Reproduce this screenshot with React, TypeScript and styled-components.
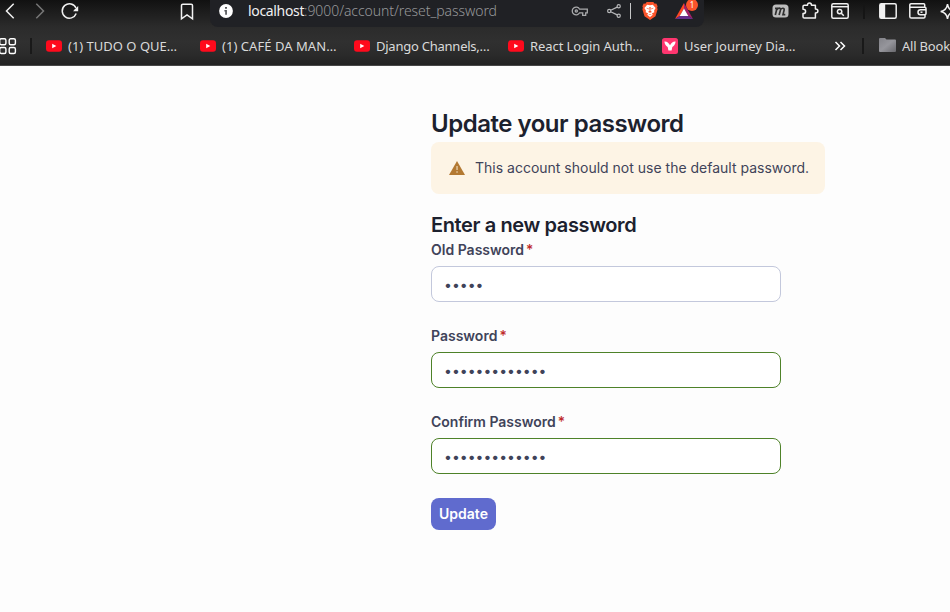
import React from "react";
import styled, { createGlobalStyle } from "styled-components";

const GlobalStyle = createGlobalStyle`
  *, *::before, *::after { box-sizing: border-box; }
  html, body { margin: 0; padding: 0; overflow: hidden; }
  body { background: #fdfdfd; font-family: "Inter", sans-serif; }
  h1, h2, p { margin: 0; }
`;

const Window = styled.div`
  width: 950px;
  height: 612px;
  overflow: hidden;
  background: #fdfdfd;
`;

const Chrome = styled.header`
  height: 66px;
  overflow: hidden;
  background: linear-gradient(#111 0, #1b1b1b 10px, #2b2b2b 27px, #303030 42px, #2b2b2b 54px, #232323 64px);
  border-bottom: 1px solid #474747;
  font-family: "Noto Sans", sans-serif;
`;

const Toolbar = styled.div`
  display: flex;
  align-items: flex-start;
  width: 970px;
  height: 27px;
  color: #f1f1f1;
`;

const Slot = styled.span<{ $w: number; $gap?: number; $color?: string }>`
  display: flex;
  flex: none;
  align-items: center;
  justify-content: center;
  width: ${(p) => p.$w}px;
  height: 22px;
  margin-left: ${(p) => p.$gap ?? 0}px;
  color: ${(p) => p.$color ?? "inherit"};
  svg { display: block; flex: none; overflow: visible; }
`;

const AddressBar = styled.div`
  display: flex;
  flex: none;
  width: 494px;
  height: 27px;
  margin-left: 16px;
  background: #202125;
  border-radius: 0 0 8px 8px;
`;

const Url = styled.span`
  width: 309px;
  margin-left: 15px;
  color: #97989a;
  font-size: 14px;
  font-weight: 300;
  line-height: 22px;
  letter-spacing: -0.07px;
  white-space: nowrap;
`;

const Host = styled.span`
  color: #f0f0f1;
  font-weight: 400;
  letter-spacing: -0.34px;
`;

const Rule = styled.span<{ $gap: number; $color: string; $h: number; $w?: number }>`
  flex: none;
  width: ${(p) => p.$w ?? 1}px;
  height: ${(p) => p.$h}px;
  margin: 3px 0 0 ${(p) => p.$gap}px;
  background: ${(p) => p.$color};
`;

const Rewards = styled(Slot)`
  position: relative;
`;

const Badge = styled.span`
  position: absolute;
  left: 11px;
  top: -1px;
  width: 12px;
  height: 12px;
  border-radius: 50%;
  background: #fb542b;
  color: #fff;
  font-size: 8px;
  line-height: 12px;
  text-align: center;
`;

const BookmarkBar = styled.nav`
  display: flex;
  align-items: flex-start;
  width: 990px;
  height: 38px;
  padding-top: 8px;
  color: #dadada;
`;

const Bookmark = styled.div`
  display: flex;
  flex: none;
  align-items: center;
  gap: 6px;
  width: 154px;
  height: 22px;
`;

const BookmarkLabel = styled.span<{ $spacing?: number }>`
  font-size: 13px;
  line-height: 22px;
  letter-spacing: ${(p) => p.$spacing ?? 0}px;
  white-space: nowrap;
`;

const Page = styled.main`
  display: flex;
  flex-direction: column;
  align-items: flex-start;
  padding: 42px 0 0 431px;
  color: #1c212e;
`;

const Title = styled.h1`
  font-size: 24px;
  font-weight: 600;
  line-height: 32px;
  letter-spacing: -0.48px;
  white-space: nowrap;
`;

const Notice = styled.div`
  display: flex;
  align-items: center;
  width: 394px;
  height: 52px;
  margin-top: 2px;
  padding-left: 18px;
  gap: 10px;
  background: #fdf4e5;
  border-radius: 8px;
  svg { display: block; flex: none; }
`;

const NoticeText = styled.p`
  color: #404359;
  font-size: 14px;
  line-height: 20px;
  white-space: nowrap;
`;

const Subtitle = styled.h2`
  margin-top: 17px;
  font-size: 20px;
  font-weight: 600;
  line-height: 28px;
  letter-spacing: -0.38px;
`;

const Form = styled.form`
  display: flex;
  flex-direction: column;
  align-items: flex-start;
  gap: 24px;
  margin-top: 1px;
`;

const Field = styled.label`
  display: flex;
  flex-direction: column;
  height: 62px;
  color: #404359;
  font-size: 14px;
  font-weight: 600;
  line-height: 20px;
`;

const Required = styled.span`
  margin-left: 2px;
  color: #bf2a2a;
  font-weight: 500;
`;

const Input = styled.input<{ $valid?: boolean }>`
  width: 350px;
  height: 36px;
  margin-top: 6px;
  padding: 0 12px;
  border: 1px solid ${(p) => (p.$valid ? "#4e8229" : "#c3c8dc")};
  border-radius: 8px;
  outline: none;
  background: #fff;
  color: #404359;
  font-family: "Inter", sans-serif;
  font-size: 14px;
`;

const Submit = styled.button`
  width: 65px;
  height: 32px;
  padding: 0 0 2px;
  border: 0;
  border-radius: 8px;
  background: #606bce;
  color: #fff;
  font-family: "Inter", sans-serif;
  font-size: 14px;
  font-weight: 600;
`;

const YouTube = () => (
  <svg width="16" height="12" viewBox="0 0 16 12">
    <rect y=".3" width="16" height="11.4" rx="3" fill="#ff0a1c" />
    <path d="M6.2 3.7v4.6L10.3 6z" fill="#fff" />
  </svg>
);

const Y = () => (
  <svg width="16" height="16" viewBox="0 0 16 16">
    <rect width="16" height="16" rx="2.5" fill="#ff366f" />
    <path d="M2.4 3.6C4.800 3.300 6.600 4.800 8 7.200c1.400-2.400 3.200-3.900 5.600-3.600-.2 2.600-1.300 4.500-3.300 5.400L9.600 12.600H6.400L5.700 9C3.700 8.100 2.600 6.200 2.400 3.600z" fill="#fff" />
  </svg>
);

const bookmarks = [
  { label: "(1) TUDO O QUE…", icon: <YouTube />, spacing: 0 },
  { label: "(1) CAFÉ DA MAN…", icon: <YouTube />, spacing: 0.05 },
  { label: "Django Channels,…", icon: <YouTube />, spacing: -0.24 },
  { label: "React Login Auth…", icon: <YouTube />, spacing: -0.07 },
  { label: "User Journey Dia…", icon: <Y />, spacing: -0.04 },
];

const line = { fill: "none", stroke: "currentColor", strokeWidth: 1.5 } as const;

function BrowserToolbar() {
  return (
    <Toolbar>
      <Slot $w={10} $gap={5}>
        <svg width="10" height="16" viewBox="0 0 10 16" {...line}><path d="M8.700.8 1.500 8l7.200 7.200" /></svg>
      </Slot>
      <Slot $w={10} $gap={20} $color="#777">
        <svg width="10" height="16" viewBox="0 0 10 16" {...line}><path d="M1.300.8 8.500 8l-7.200 7.200" /></svg>
      </Slot>
      <Slot $w={18} $gap={16}>
        <svg width="18" height="16" viewBox="0 0 18 16" {...line}>
          <path d="M15 5A7.200 7.200 0 1 0 15.200 10.500" />
          <path d="M17.200 3v5.200h-5.100l1.700-2z" fill="currentColor" stroke="none" />
        </svg>
      </Slot>
      <Slot $w={14} $gap={101}>
        <svg width="14" height="17" viewBox="0 0 14 17" {...line}><path d="M1.500 2.500a1.300 1.300 0 0 1 1.300-1.300h8.400a1.300 1.300 0 0 1 1.300 1.300v13.300L7 12l-5.500 3.800z" /></svg>
      </Slot>
      <AddressBar>
        <Slot $w={14} $gap={9}>
          <svg width="14" height="14" viewBox="0 0 14 14">
            <circle cx="7" cy="7" r="6.900" fill="#fff" />
            <path d="M6 3.100h2v1.700H6zM5.400 6h2.500v4.800H6.200V7.400h-.8z" fill="#55575a" />
          </svg>
        </Slot>
        <Url><Host>localhost</Host>:9000/account/reset_password</Url>
        <Slot $w={16} $gap={15} $color="#a9aaac">
          <svg width="16" height="10" viewBox="0 0 16 10" fill="none" stroke="currentColor" strokeWidth="1.300">
            <path d="M7.600 3.200A3.900 3.900 0 1 0 7.600 6.800h3.100v2.500h3V6.800h1.600V3.200z" /><circle cx="4.300" cy="5" r="1.100" />
          </svg>
        </Slot>
        <Slot $w={14} $gap={19} $color="#b6b7b9">
          <svg width="14" height="14" viewBox="0 0 14 14" fill="none" stroke="currentColor" strokeWidth="1.200">
            <circle cx="2.200" cy="7" r="1.600" /><circle cx="11.700" cy="2.300" r="1.600" /><circle cx="11.700" cy="11.700" r="1.600" />
            <path d="m3.700 6.300 6.500-3.200M3.700 7.700l6.500 3.200" />
          </svg>
        </Slot>
        <Rule $gap={9} $h={16} $color="#c6c7c8" />
        <Slot $w={16} $gap={11}>
          <svg width="16" height="18" viewBox="0 0 16 18">
            <path d="M4.700 0h6.600l1.400 1.700 1.600-.2 1.300 2.800-.5 1.500.5 1.500-2.100 7L8 18l-5.500-3.700-2.100-7 .5-1.500L.4 4.300l1.300-2.800 1.600.2z" fill="#fb542b" />
            <path d="M5.200 2.700 8 3.200l2.800-.5 2.800 3.400-1.500 2.400.2 1.700-2.500 1.200 1 1.400L8 15l-2.800-2.200 1-1.400-2.500-1.200.2-1.700-1.500-2.400z" fill="#fff" />
            <path d="m4 5.800 2.800.7-.3 1.100zM12 5.800l-2.800.7.3 1.100zM7.300 5h1.400l-.3 3.800L10 9.900l-2 .8-2-.8 1.600-1.100zM6 12.300h4l-2 .8z" fill="#fb542b" />
          </svg>
        </Slot>
        <Rewards $w={18} $gap={17}>
          <svg width="18" height="16" viewBox="0 0 18 16">
            <path d="M9 0 0 16l4.700-3L9 5.400z" fill="#ff4724" />
            <path d="M9 0v5.400l4.300 7.600L18 16z" fill="#a52167" />
            <path d="m0 16 4.700-3h8.600l4.700 3z" fill="#66308a" />
            <path d="M9 5.400 4.700 13h8.600z" fill="#fff" />
          </svg>
          <Badge>1</Badge>
        </Rewards>
      </AddressBar>
      <Slot $w={17} $gap={68}>
        <svg width="17" height="14" viewBox="0 0 17 14">
          <rect x=".5" y=".5" width="16" height="13" rx="3.500" fill="#bcbcbc" />
          <path d="M3 4.300h2L3.300 11M5 5.600c1-1.800 4-2 3.500.3L7.100 11M8.500 5.600c1.200-1.800 4.200-2 3.600.5L11 10.600h2.300" fill="none" stroke="#303030" strokeWidth="1.700" />
        </svg>
      </Slot>
      <Slot $w={18} $gap={12}>
        <svg width="18" height="18" viewBox="0 0 18 18" {...line}>
          <path d="M3.300 3.300h3.200C6.500 1.700 7.200.9 8.500.9s2 .8 2 2.400h3.900v3.800c1.600 0 2.500.7 2.500 2s-.9 2-2.500 2v5H3.300q-1.300 0-1.300-1.300v-3.300c1.700 0 2.600-.8 2.600-2.100S3.700 7.300 2 7.300V4.600q0-1.300 1.300-1.300z" strokeLinejoin="round" />
        </svg>
      </Slot>
      <Slot $w={18} $gap={12}>
        <svg width="18" height="16" viewBox="0 0 18 16" {...line}>
          <rect x=".8" y=".8" width="16.400" height="14.400" rx="1.500" /><path d="M1 3.700h16" /><circle cx="8.600" cy="8.600" r="2.200" /><path d="m10.300 10.300 2.500 2.500" />
        </svg>
      </Slot>
      <Rule $gap={14} $w={2} $h={16} $color="#151515" />
      <Slot $w={18} $gap={14}>
        <svg width="18" height="16" viewBox="0 0 18 16" {...line}><rect x=".8" y=".8" width="16.400" height="14.400" rx="1.500" /><path d="M1 1h5.200v14H1z" fill="currentColor" stroke="none" /></svg>
      </Slot>
      <Slot $w={18} $gap={12}>
        <svg width="18" height="16" viewBox="0 0 18 16" {...line}>
          <path d="M15.700 4V1.800a1 1 0 0 0-1-1H2a1.200 1.200 0 0 0-1.200 1.200v11.500a1.600 1.600 0 0 0 1.600 1.600h12.300a1.300 1.300 0 0 0 1.300-1.300V12M1 4.200h14.700a1.300 1.300 0 0 1 1.300 1.300v5a1.200 1.200 0 0 1-1.200 1.200H11.500a2.500 2.500 0 0 1 0-5H17" /><path d="M11.500 9.200h2" />
        </svg>
      </Slot>
      <Slot $w={17} $gap={12}>
        <svg width="17" height="17" viewBox="0 0 17 17" {...line}><path d="M8.500 1.200c.6 4.400 2.400 6.500 6.800 7.300-4.400.8-6.200 2.900-6.800 7.300-.6-4.400-2.400-6.500-6.800-7.300 4.400-.8 6.200-2.900 6.800-7.300z" /></svg>
      </Slot>
    </Toolbar>
  );
}

function Bookmarks() {
  return (
    <BookmarkBar>
      <Slot $w={16} $color="#fff">
        <svg width="16" height="16" viewBox="0 0 16 16" fill="none" stroke="currentColor" strokeWidth="1.400">
          <rect x="-.3" y=".7" width="6.200" height="6" rx="1.500" /><rect x="9.200" y=".7" width="6.200" height="6" rx="1.500" />
          <rect x="-.3" y="9.500" width="6.200" height="6" rx="1.500" /><rect x="9.200" y="9.500" width="6.200" height="6" rx="1.500" />
        </svg>
      </Slot>
      <Rule $gap={14} $w={2} $h={16} $color="#191919" />
      <Slot $w={14} />
      {bookmarks.map((b) => (
        <Bookmark key={b.label}>
          {b.icon}
          <BookmarkLabel $spacing={b.spacing}>{b.label}</BookmarkLabel>
        </Bookmark>
      ))}
      <Slot $w={12} $gap={18} $color="#fff">
        <svg width="12" height="10" viewBox="0 0 12 10" {...line}><path d="m1.500 1 4 4-4 4m5-8 4 4-4 4" /></svg>
      </Slot>
      <Rule $gap={16} $w={2} $h={16} $color="#191919" />
      <Slot $w={17} $gap={15}>
        <svg width="17" height="16" viewBox="0 0 17 16">
          <defs><linearGradient id="folder" x2="1" y2="1"><stop stopColor="#828288" /><stop offset=".5" stopColor="#96969c" /><stop offset="1" stopColor="#68686d" /></linearGradient></defs>
          <path d="M0 1q0-1 1-1h5l1.500 1.500H16q1 0 1 1V13q0 1-1 1H1q-1 0-1-1z" fill="url(#folder)" />
        </svg>
      </Slot>
      <Slot $w={6} />
      <BookmarkLabel $spacing={-0.2}>All Book</BookmarkLabel>
    </BookmarkBar>
  );
}

function PasswordField({ label, value, valid }: { label: string; value: string; valid?: boolean }) {
  return (
    <Field>
      <span>{label}<Required>*</Required></span>
      <Input type="password" defaultValue={value} $valid={valid} />
    </Field>
  );
}

export default function App() {
  return (
    <Window>
      <GlobalStyle />
      <Chrome>
        <BrowserToolbar />
        <Bookmarks />
      </Chrome>
      <Page>
        <Title>Update your password</Title>
        <Notice>
          <svg width="16" height="14" viewBox="0 0 16 14">
            <path d="M8 0 16 14H0z" fill="#b37932" />
            <path d="M7.300 5h1.500v4H7.300zm0 5.300h1.500v1.500H7.300z" fill="#e2c59b" />
          </svg>
          <NoticeText>This account should not use the default password.</NoticeText>
        </Notice>
        <Subtitle>Enter a new password</Subtitle>
        <Form onSubmit={(e) => e.preventDefault()}>
          <PasswordField label="Old Password" value="admin" />
          <PasswordField label="Password" value="newpassword12" valid />
          <PasswordField label="Confirm Password" value="newpassword12" valid />
          <Submit>Update</Submit>
        </Form>
      </Page>
    </Window>
  );
}
